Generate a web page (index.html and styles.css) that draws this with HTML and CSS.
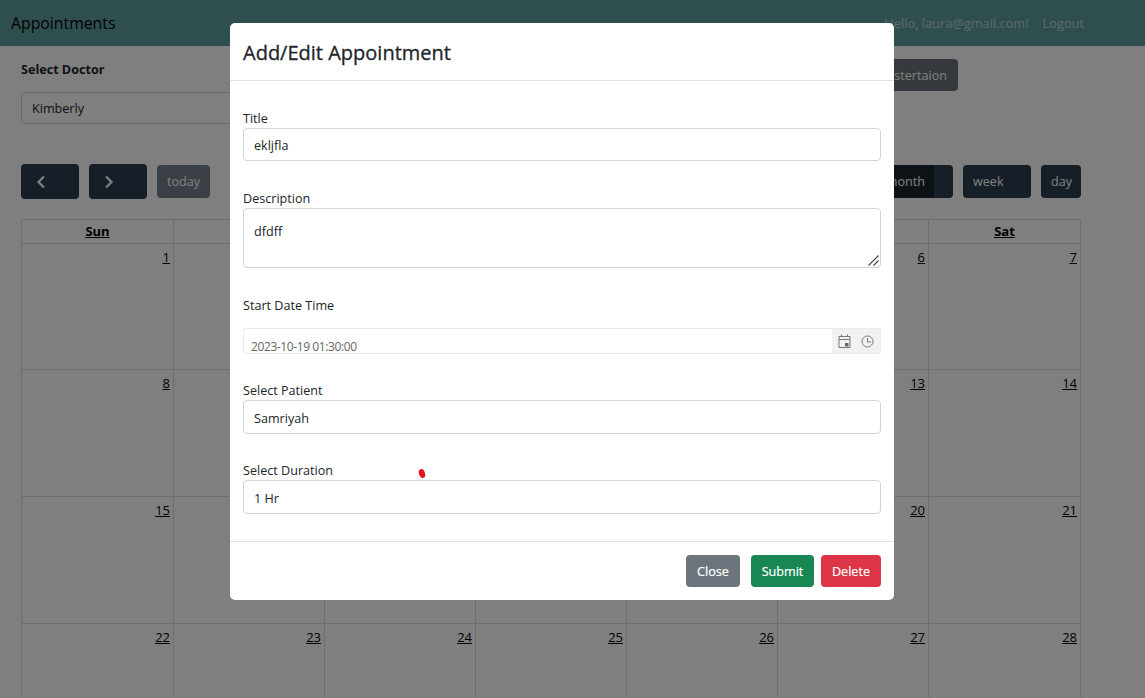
FILE: index.html
```html
<!DOCTYPE html>
<html lang="en">
<head>
	<meta charset="UTF-8">
	<title>Appointments</title>
	<link rel="stylesheet" href="styles.css">
</head>
<body>

<nav class="navbar">
	<a class="brand" href="#">Appointments</a>
	<div class="nav-right">
		<span class="nav-link">Hello, laura@gmail.com!</span>
		<a class="nav-link" href="#">Logout</a>
	</div>
</nav>

<main class="page">
	<div class="doctor-row">
		<div class="doctor-col">
			<label class="doctor-label">Select Doctor</label>
			<div class="doctor-select">Kimberly</div>
		</div>
		<button class="btn btn-grey register">Doctor Registertaion</button>
	</div>

	<div class="toolbar">
		<div class="tool-group">
			<button class="btn btn-cal arrow">
				<svg width="10" height="14" viewBox="0 0 10 14"><path d="M8 1.5 2.5 7 8 12.5" fill="none" stroke="currentColor" stroke-width="2.2"/></svg>
			</button>
			<button class="btn btn-cal arrow">
				<svg width="10" height="14" viewBox="0 0 10 14"><path d="M2 1.5 7.5 7 2 12.5" fill="none" stroke="currentColor" stroke-width="2.2"/></svg>
			</button>
			<button class="btn btn-cal today">today</button>
		</div>
		<div class="tool-group">
			<div class="month-group">
				<button class="btn btn-cal month">month</button>
				<span class="month-end"></span>
			</div>
			<button class="btn btn-cal week">week</button>
			<button class="btn btn-cal day">day</button>
		</div>
	</div>

	<table class="calendar">
		<thead>
			<tr><th><a href="#">Sun</a></th><th><a href="#">Mon</a></th><th><a href="#">Tue</a></th><th><a href="#">Wed</a></th><th><a href="#">Thu</a></th><th><a href="#">Fri</a></th><th><a href="#">Sat</a></th></tr>
		</thead>
		<tbody>
			<tr><td><a href="#">1</a></td><td><a href="#">2</a></td><td><a href="#">3</a></td><td><a href="#">4</a></td><td><a href="#">5</a></td><td><a href="#">6</a></td><td><a href="#">7</a></td></tr>
			<tr><td><a href="#">8</a></td><td><a href="#">9</a></td><td><a href="#">10</a></td><td><a href="#">11</a></td><td><a href="#">12</a></td><td><a href="#">13</a></td><td><a href="#">14</a></td></tr>
			<tr><td><a href="#">15</a></td><td><a href="#">16</a></td><td><a href="#">17</a></td><td><a href="#">18</a></td><td><a href="#">19</a></td><td><a href="#">20</a></td><td><a href="#">21</a></td></tr>
			<tr><td><a href="#">22</a></td><td><a href="#">23</a></td><td><a href="#">24</a></td><td><a href="#">25</a></td><td><a href="#">26</a></td><td><a href="#">27</a></td><td><a href="#">28</a></td></tr>
		</tbody>
	</table>
</main>

<div class="backdrop"></div>

<div class="modal">
	<div class="modal-header">
		<h1 class="modal-title">Add/Edit Appointment</h1>
	</div>
	<div class="modal-body">
		<div class="field">
			<label>Title</label>
			<input class="control" type="text" value="ekljfla">
		</div>
		<div class="field">
			<label>Description</label>
			<textarea class="control area">dfdff</textarea>
			<svg class="grip" width="11" height="11" viewBox="0 0 11 11" fill="none" stroke="#444" stroke-width="1.1"><path d="M0.5 10.5 10.5 0.5M5.5 10.5 10.5 5.5"/></svg>
		</div>
		<div class="field">
			<label>Start Date Time</label>
			<div class="date-box">
				<span class="date-value">2023-10-19 01:30:00</span>
				<span class="date-icons">
					<svg width="13" height="14" viewBox="0 0 13 14" fill="none" stroke="#777" stroke-width="1"><path d="M1 2.5h11v11h-11zM1 5.5h11M3.5 .5v2.5M9.5 .5v2.5"/><rect x="7" y="9" width="3.5" height="3.5" fill="#666" stroke="none"/></svg>
					<svg width="13" height="13" viewBox="0 0 13 13" fill="none" stroke="#777" stroke-width="1"><circle cx="6.5" cy="6.5" r="5.5"/><path d="M6.5 3V7H10"/></svg>
				</span>
			</div>
		</div>
		<div class="field tight">
			<label>Select Patient</label>
			<div class="control select-like">Samriyah</div>
		</div>
		<div class="field tight">
			<label>Select Duration</label>
			<div class="control select-like">1 Hr</div>
			<span class="red-mark"></span>
		</div>
	</div>
	<div class="modal-footer">
		<button class="btn btn-grey close">Close</button>
		<button class="btn btn-green submit">Submit</button>
		<button class="btn btn-red delete">Delete</button>
	</div>
</div>

</body>
</html>
```
FILE: styles.css
```css
* {
	box-sizing: border-box;
}

html, body {
	height: 100%;
	overflow: hidden;
}

body {
	margin: 0;
	background-color: #fff;
	color: #212529;
	font-family: "Open Sans", "Noto Sans", sans-serif;
	font-size: 12.6px;
}

.navbar {
	display: flex;
	align-items: center;
	justify-content: space-between;
	height: 46px;
	padding: 0 61px 0 11px;
	background-color: #5f9f9f;
}

.brand {
	color: #000;
	font-size: 15.8px;
	text-decoration: none;
}

.nav-right {
	display: flex;
	gap: 14px;
}

.nav-link {
	color: rgba(255, 255, 255, 0.55);
	font-size: 12.8px;
	text-decoration: none;
}

.page {
	padding: 13px 64px 0 21px;
}

.doctor-row {
	display: flex;
	align-items: flex-start;
	justify-content: space-between;
	padding-right: 123px;
}

.doctor-col {
	width: 700px;
}

.doctor-label {
	display: block;
	height: 33px;
	padding-top: 2px;
	font-weight: 700;
}

.doctor-select {
	height: 32px;
	padding: 7px 10px;
	border: 1px solid #ced4da;
	border-radius: 4px;
}

.btn {
	border: none;
	border-radius: 4px;
	color: #fff;
	font-family: inherit;
	font-size: 12.6px;
	cursor: pointer;
}

.btn-grey {
	background-color: #6c757d;
}

.register {
	height: 32px;
	padding: 0 11px;
	white-space: nowrap;
}

.btn-green {
	background-color: #198754;
}

.btn-red {
	background-color: #dc3545;
}

.toolbar {
	display: flex;
	align-items: center;
	justify-content: space-between;
	margin-top: 40px;
	height: 35px;
}

.tool-group {
	display: flex;
	align-items: center;
	gap: 10px;
}

.btn-cal {
	height: 33px;
	padding: 0 10px;
	background-color: #2c3e50;
}

.arrow {
	display: flex;
	align-items: center;
	justify-content: center;
	width: 58px;
	height: 35px;
	padding: 0 18px 0 0;
}

.today {
	width: 53px;
	opacity: 0.65;
}

.month-group {
	display: flex;
	height: 33px;
	border-radius: 4px;
	overflow: hidden;
}

.month {
	width: 90px;
	border-radius: 0;
	background-color: #1a252f;
	text-align: right;
	padding-right: 9px;
}

.month-end {
	width: 19px;
	background-color: #2c3e50;
}

.week {
	width: 68px;
	text-align: left;
}

.day {
	width: 40px;
}

.calendar {
	width: 1060px;
	margin-top: 20px;
	border-collapse: collapse;
	table-layout: fixed;
}

.calendar th,
.calendar td {
	border: 1px solid #ddd;
}

.calendar th {
	height: 24px;
	padding: 0 0 2px;
	font-weight: 700;
	font-size: 13px;
}

.calendar th:first-child,
.calendar th:last-child {
	width: 152px;
}

.calendar td {
	height: 127px;
	padding: 4px 3px;
	text-align: right;
	vertical-align: top;
	font-size: 13px;
}

.calendar tbody tr:first-child td {
	height: 126px;
}

.calendar a {
	color: #000;
}

.backdrop {
	position: fixed;
	inset: 0;
	background-color: rgba(0, 0, 0, 0.5);
}

.modal {
	position: fixed;
	top: 23px;
	left: 230px;
	width: 664px;
	height: 577px;
	display: flex;
	flex-direction: column;
	background-color: #fff;
	border-radius: 5px;
}

.modal-header {
	height: 58px;
	padding: 2px 13px 0;
	display: flex;
	align-items: center;
	border-bottom: 1px solid #dee2e6;
}

.modal-title {
	margin: 0;
	font-size: 20px;
	font-weight: 500;
	-webkit-text-stroke: 0.3px #212529;
}

.modal-body {
	flex: 1;
	padding: 0 13px;
}

.field {
	position: relative;
	padding-top: 28px;
}

.field.tight {
	padding-top: 27px;
}

.field label {
	display: block;
	height: 18px;
	padding-top: 1px;
	line-height: 18px;
}

.control {
	display: block;
	width: 100%;
	margin-top: 1px;
	padding: 2px 10px 0;
	border: 1px solid #ced4da;
	border-radius: 4px;
	background-color: #fff;
	color: #212529;
	font-family: inherit;
	font-size: 12.6px;
	height: 33px;
	line-height: 29px;
}

.select-like {
	height: 34px;
	line-height: 32px;
}

.area {
	height: 60px;
	padding-top: 14px;
	line-height: 18px;
	resize: none;
}

.grip {
	position: absolute;
	right: 2px;
	bottom: 2px;
}

.date-box {
	display: flex;
	justify-content: space-between;
	height: 26px;
	margin-top: 14px;
	border: 1px solid #e9ecef;
	border-radius: 2px;
	overflow: hidden;
}

.date-value {
	padding: 10px 0 0 7px;
	font-size: 12px;
	letter-spacing: -0.4px;
	line-height: 16px;
	color: #666;
}

.date-icons {
	display: flex;
	align-items: center;
	gap: 10px;
	padding: 0 6px;
	background-color: #f1f1f1;
}

.red-mark {
	position: absolute;
	top: 35px;
	left: 176px;
	width: 6px;
	height: 9px;
	border-radius: 50%;
	background-color: #e8141c;
	transform: rotate(-20deg);
}

.modal-footer {
	height: 59px;
	padding: 0 13px;
	display: flex;
	align-items: center;
	justify-content: flex-end;
	gap: 7px;
	border-top: 1px solid #dee2e6;
}

.modal-footer .btn {
	height: 32px;
	padding: 0;
	font-weight: 500;
	-webkit-text-stroke: 0.2px #fff;
}

.modal-footer .close {
	width: 54px;
	margin-right: 4px;
}

.modal-footer .submit {
	width: 63px;
}

.modal-footer .delete {
	width: 60px;
}
```
